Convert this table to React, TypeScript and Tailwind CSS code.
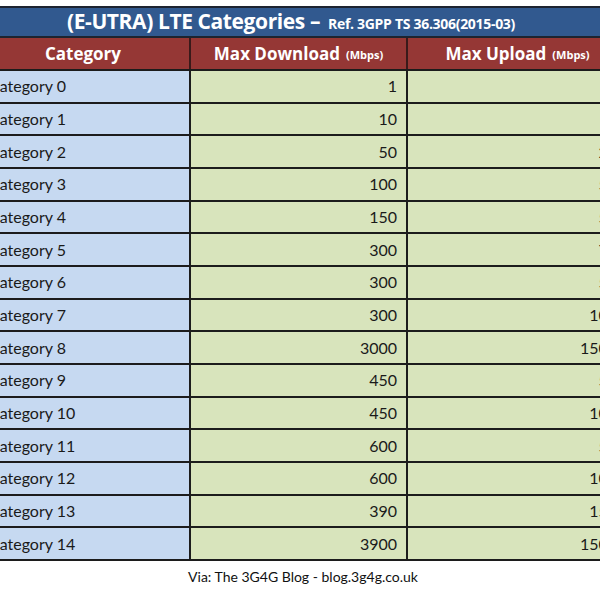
import React from "react";

const rows: [string, string, string][] = [
  ["Category 0", "1", "1"],
  ["Category 1", "10", "5"],
  ["Category 2", "50", "25"],
  ["Category 3", "100", "50"],
  ["Category 4", "150", "50"],
  ["Category 5", "300", "75"],
  ["Category 6", "300", "50"],
  ["Category 7", "300", "100"],
  ["Category 8", "3000", "1500"],
  ["Category 9", "450", "50"],
  ["Category 10", "450", "100"],
  ["Category 11", "600", "50"],
  ["Category 12", "600", "100"],
  ["Category 13", "390", "150"],
  ["Category 14", "3900", "1500"],
];

export default function App() {
  return (
    <div className="w-[600px] h-[600px] bg-white overflow-hidden relative">
      <div className="pt-[6px] ml-[-23px] w-[650px]">
        <div
          className="h-[32px] bg-[#31598f] border-t-2 border-b-2 border-[#1d2430] flex items-center justify-center text-white pr-[22px]"
          style={{ fontFamily: "'Open Sans', sans-serif" }}
        >
          <span className="text-[21px] font-bold tracking-[-0.4px]">(E-UTRA) LTE Categories –</span>
          <span className="text-[14px] font-bold ml-[8px] mt-[3px] tracking-[-0.3px]">Ref. 3GPP TS 36.306(2015-03)</span>
        </div>
        <div
          className="grid grid-cols-[214px_217px_219px] h-[33px] bg-[#953735] border-b-2 border-[#1c1c1c] text-white font-bold"
          style={{ fontFamily: "'Open Sans', sans-serif" }}
        >
          <div className="flex items-center justify-center border-r-2 border-[#3a1a1a] text-[17px]">Category</div>
          <div className="flex items-center justify-center border-r-2 border-[#3a1a1a] text-[17px]">
            Max Download<span className="text-[11px] ml-[6px] mt-[3px]">(Mbps)</span>
          </div>
          <div className="flex items-center justify-center text-[17px]">
            Max Upload<span className="text-[11px] ml-[6px] mt-[3px]">(Mbps)</span>
          </div>
        </div>
        {rows.map(([c, d, u]) => (
          <div
            key={c}
            className="grid grid-cols-[214px_217px_219px] h-[32.67px] border-b-2 border-[#1c1c1c] text-[16px] text-[#1a1a1a]"
            style={{ fontFamily: "Lato, sans-serif" }}
          >
            <div className="bg-[#c6d9f1] border-r-2 border-[#1c1c1c] flex items-center pl-[12px]">{c}</div>
            <div className="bg-[#d8e4bc] border-r-2 border-[#1c1c1c] flex items-center justify-end pr-[9px]">{d}</div>
            <div className="bg-[#d8e4bc] flex items-center justify-end pr-[10px]">{u}</div>
          </div>
        ))}
      </div>
      <div
        className="text-center text-[14px] text-[#111] mt-[5px] pl-[6px]"
        style={{ fontFamily: "Lato, sans-serif" }}
      >
        Via: The 3G4G Blog - blog.3g4g.co.uk
      </div>
    </div>
  );
}
